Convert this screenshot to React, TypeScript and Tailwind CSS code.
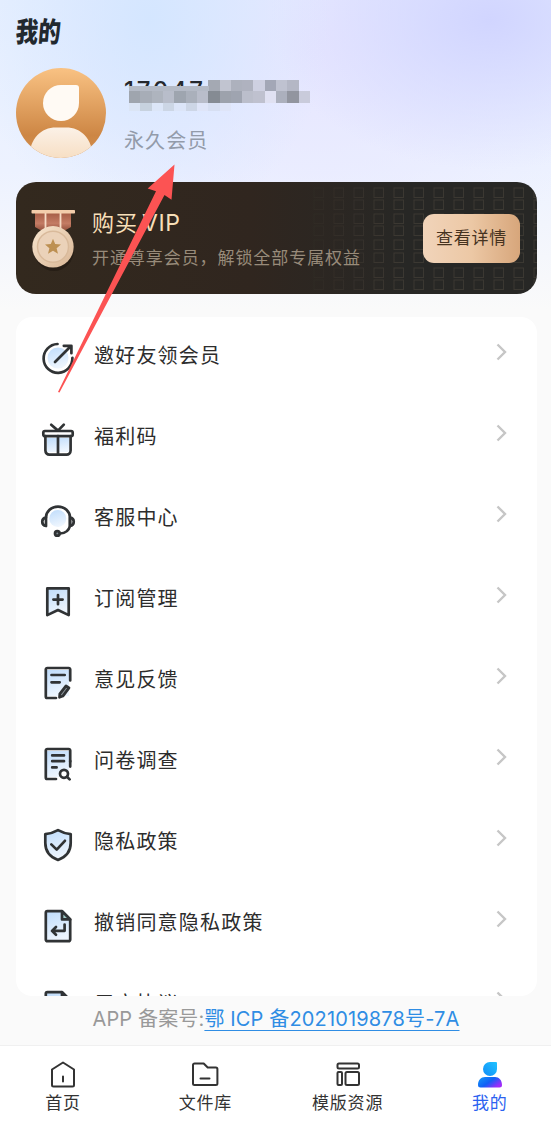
import { ReactNode } from "react";

type MenuItem = {
  label: string;
  icon: ReactNode;
};

type TabProps = {
  label: string;
  icon: ReactNode;
  active?: boolean;
};

const DocOutline = () => (
  <>
    <rect x="7" y="6" width="22" height="26" fill="url(#tint)" stroke="none" />
    <path d="M30.2 16.5V5.5a1.5 1.5 0 0 0-1.5-1.5H7.3a1.5 1.5 0 0 0-1.5 1.5v27a1.5 1.5 0 0 0 1.5 1.5H16" />
  </>
);

const FoldedDoc = () => (
  <>
    <path
      d="M22 4.2H7.4A1.6 1.6 0 0 0 5.8 5.8v26.8a1.6 1.6 0 0 0 1.6 1.6h21.2a1.6 1.6 0 0 0 1.6-1.6V12.4z"
      fill="url(#tint)"
    />
    <path d="M22 4.2v8.2h8.2z" fill="#9ec9c6" />
  </>
);

const menuItems: MenuItem[] = [
  {
    label: "邀好友领会员",
    icon: (
      <>
        <circle cx="18" cy="18" r="10.5" fill="url(#tint)" stroke="none" />
        <path d="M17.5 4a14.4 14.4 0 1 0 14.9 13.8" />
        <path d="M15 22 31 6M23.8 5.8h7.6v7.4" />
      </>
    ),
  },
  {
    label: "福利码",
    icon: (
      <>
        <rect x="7" y="17" width="22" height="14" fill="url(#tint)" stroke="none" />
        <rect x="3.3" y="10" width="29.4" height="5.2" rx="1.6" fill="#fff" />
        <path d="M5.4 15.2v14.4a4 4 0 0 0 4 4h17.2a4 4 0 0 0 4-4V15.2M18 15.2v18.4M11.2 3.8 18 9.6l5.8-6" />
      </>
    ),
  },
  {
    label: "客服中心",
    icon: (
      <>
        <circle cx="17.8" cy="16.5" r="8.5" fill="url(#tint)" stroke="none" />
        <path d="M6 15.6a12 11 0 0 1 24 0v8.4c-1.2 4.5-5 7.3-9.8 7.5" />
        <path d="M6 24v-8.4c-5 .6-5 7.8 0 8.4zM30 15.6c5 .6 5 7.8 0 8.4z" />
        <circle cx="17.3" cy="31.4" r="2.3" fill="#7d8991" />
      </>
    ),
  },
  {
    label: "订阅管理",
    icon: (
      <>
        <path d="M7.3 5.3h21.4v26.8L18 27 7.3 32.1z" fill="url(#tint)" />
        <path d="M18 12v9.2M13.4 16.6h9.2" />
      </>
    ),
  },
  {
    label: "意见反馈",
    icon: (
      <>
        <DocOutline />
        <path d="M11.5 11h13.2M11.5 18.3h8.2" />
        <path d="m26 21.8 3 2.1-6.1 8.2-3.4 1.2.3-3.5z" fill="#8d979d" />
      </>
    ),
  },
  {
    label: "问卷调查",
    icon: (
      <>
        <DocOutline />
        <path d="M30.2 16v5.6M12.2 10.4h11.8M12.2 16.2h11.8M12.2 22.4h4.4" />
        <circle cx="24" cy="28.8" r="4" fill="#fff" />
        <path d="m27 31.8 2.6 2.6" />
      </>
    ),
  },
  {
    label: "隐私政策",
    icon: (
      <>
        <path
          d="M18 4.2c4 2.3 8.3 3.6 12.7 3.9V17c0 8-4.8 14-12.7 16.9C10.1 31 5.3 25 5.3 17V8.1C9.7 7.8 14 6.5 18 4.2z"
          fill="url(#tint)"
        />
        <path d="m11.3 18.4 5.4 5.2 8.2-8.8" />
      </>
    ),
  },
  {
    label: "撤销同意隐私政策",
    icon: (
      <>
        <FoldedDoc />
        <path d="M24.6 17.6v6.2H12.4M16 20l-4 3.9 4 3.9" />
      </>
    ),
  },
  {
    label: "用户协议",
    icon: <FoldedDoc />,
  },
];

const MenuRow = ({ label, icon }: MenuItem) => (
  <div className="flex h-[81px] shrink-0 items-center pr-[29px] pl-6">
    <svg
      className="size-9 shrink-0"
      viewBox="0 0 36 36"
      fill="none"
      stroke="#303335"
      strokeWidth="2.7"
      strokeLinecap="round"
      strokeLinejoin="round"
    >
      {icon}
    </svg>
    <p className="ml-[18px] flex-1 pb-[5px] text-[20px] leading-7 tracking-[1.2px] text-[#2d2d2d]">
      {label}
    </p>
    <svg className="mb-[11px] h-[18px] w-3" viewBox="0 0 12 18" fill="none">
      <path d="m1.5 1.500 7.500 7.500-7.500 7.500" stroke="#c6c6c6" strokeWidth="2.4" />
    </svg>
  </div>
);

const Tab = ({ label, icon, active }: TabProps) => (
  <div className="flex flex-col items-center pt-[13px]">
    <svg
      className="size-8"
      viewBox="0 0 32 32"
      fill="none"
      stroke="#333"
      strokeWidth="2"
      strokeLinejoin="round"
      strokeLinecap="round"
    >
      {icon}
    </svg>
    <p
      className={
        active
          ? "-mt-px text-[17px] leading-6 tracking-[0.8px] text-[#2b62f0]"
          : "-mt-px text-[17px] leading-6 tracking-[0.8px] text-[#333]"
      }
    >
      {label}
    </p>
  </div>
);

const Avatar = () => (
  <svg className="size-[90px]" viewBox="0 0 90 90">
    <defs>
      <linearGradient id="avatarBg" x1="0" y1="0" x2="0" y2="1">
        <stop offset="0" stopColor="#f9c283" />
        <stop offset="0.75" stopColor="#cd8644" />
        <stop offset="1" stopColor="#d28f50" />
      </linearGradient>
      <linearGradient id="avatarBody" x1="0" y1="0" x2="0" y2="1">
        <stop offset="0" stopColor="#fbf1e7" />
        <stop offset="1" stopColor="#f7dfc4" />
      </linearGradient>
      <clipPath id="avatarClip">
        <circle cx="45" cy="45" r="45" />
      </clipPath>
    </defs>
    <g clipPath="url(#avatarClip)">
      <rect width="90" height="90" fill="url(#avatarBg)" />
      <path d="M45 17h15a3 3 0 0 1 3 3v15a18 18 0 1 1-18-18z" fill="#fffaf4" />
      <path d="M13 90c1-20 12-30.5 27-30.5h10c15 0 26 10.5 27 30.5z" fill="url(#avatarBody)" />
    </g>
  </svg>
);

const Medal = () => (
  <svg className="h-[64px] w-[48px]" viewBox="0 0 48 64">
    <defs>
      <linearGradient id="disc" x1="0" y1="0" x2="1" y2="1">
        <stop offset="0" stopColor="#f8e6cf" />
        <stop offset="1" stopColor="#d9b695" />
      </linearGradient>
      <linearGradient id="ribbon" x1="0" y1="0" x2="0" y2="1">
        <stop offset="0" stopColor="#a35a43" />
        <stop offset="0.6" stopColor="#c47c64" />
        <stop offset="1" stopColor="#91503c" />
      </linearGradient>
    </defs>
    <ellipse cx="25" cy="42" rx="20" ry="21" fill="#1c140d" opacity="0.5" />
    <path d="M6 4h36v15l-7 4H13l-7-4z" fill="url(#ribbon)" />
    <path d="M16.5 4v18M31.5 4v18" stroke="#f6dbc6" strokeWidth="1.8" />
    <rect x="2.5" y="2" width="43.5" height="3.5" rx="0.8" fill="#f3cdab" />
    <circle cx="24" cy="38.8" r="20.7" fill="url(#disc)" />
    <circle cx="24" cy="38.8" r="15.5" fill="#ebd2b9" stroke="#d9ba9b" strokeWidth="1.5" />
    <path
      d="m24 30.8 2.2 5.3 5.8.4-4.4 3.7 1.4 5.6-5-3-5 3 1.4-5.6-4.4-3.7 5.8-.4z"
      fill="#bd9052"
    />
  </svg>
);

const patternColumns = [0, 1, 2, 3, 4, 5, 6, 7, 8, 9, 10, 11];
const patternRows = [6, 18, 32, 44, 58, 71, 86, 98];

const BannerPattern = () => (
  <svg className="absolute top-0 right-0 h-full w-[240px]" viewBox="0 0 240 112" fill="none">
    {patternColumns.map((col) =>
      patternRows.map((row) => (
        <rect
          key={`${col}-${row}`}
          x={col * 20 + 17}
          y={row}
          width="9.5"
          height="9.5"
          stroke="#5a5347"
          strokeWidth="1"
          opacity={Math.min(0.4, 0.1 + col * 0.08)}
        />
      ))
    )}
  </svg>
);

// pixel blocks covering the phone number, one colour per cell
const maskRows = [
  {
    className: "flex h-[11px]",
    cells: ["#00000000", "#00000000", "#00000000", "#00000000", "#00000000", "#00000000", "#00000000", "#a4a9b3", "#c1c4d0", "#adb1bd", "#afb2bf", "#ced0e1", "#a3a7b6", "#bfc2d0", "#b4b7c5", "#00000000"],
  },
  {
    className: "flex h-3",
    cells: ["#9fa5ae", "#a7adb7", "#aeb4be", "#b8bdca", "#9ea5af", "#aab0bb", "#b9bdca", "#858b93", "#9da2ac", "#9fa4b0", "#bbbecb", "#bfc1cf", "#e0e1f2", "#acb0bd", "#92959f", "#c9cbdb"],
  },
  {
    className: "flex h-2",
    cells: ["#dbe5f5", "#c7d2df", "#dce6f8", "#ccd6e5", "#dce5f8", "#cdd6e6", "#dfe5f8", "#d7dff2", "#dfe5f8", "#00000000", "#00000000", "#00000000", "#00000000", "#00000000", "#00000000", "#00000000"],
  },
];

const PhoneNumber = () => (
  <div className="relative h-[34px] w-[190px]">
    <p className="h-[11px] overflow-hidden font-['Inter'] text-[24px] leading-[28px] font-medium tracking-[2.7px] text-[#25282d]">
      17047
    </p>
    <div className="absolute top-[3px] left-[5px] w-[181px]">
      {maskRows.map((row, i) => (
        <div key={i} className={row.className}>
          {row.cells.map((color, j) => (
            <div key={j} className="flex-1" style={{ backgroundColor: color }} />
          ))}
        </div>
      ))}
      <div className="absolute top-[6px] left-0 h-[5px] w-[80px] bg-[#b4bac6]" />
    </div>
  </div>
);

const Banner = () => (
  <section className="relative mr-[14px] ml-4 flex h-28 items-center overflow-hidden rounded-[20px] bg-linear-to-r from-[#33291e] via-[#30261f] via-45% to-[#272725] to-75%">
    <BannerPattern />
    <div className="relative ml-[13px] pt-1">
      <Medal />
    </div>
    <div className="relative ml-[15px] flex-1 whitespace-nowrap">
      <h2 className="text-[22px] leading-8 tracking-[1px] text-[#f7dfb8]">
        购买<span className="ml-1 font-['Inter'] text-[23px] tracking-[0.6px]">VIP</span>
      </h2>
      <p className="mt-1 text-[17px] leading-7 tracking-[0.93px] text-[#988b7a]">
        开通尊享会员，解锁全部专属权益
      </p>
    </div>
    <button className="relative mr-[17px] h-[49px] w-[97px] rounded-[11px] bg-linear-to-r from-[#f1d4ba] via-[#ecc8a5] to-[#d7a67b] pb-0.5 text-[17px] tracking-[0.7px] text-[#46331f]">
      查看详情
    </button>
  </section>
);

const App = () => {
  return (
    <div className="relative flex h-[1130px] w-[551px] flex-col overflow-hidden bg-[#fafafa] font-['Noto_Sans_CJK_SC',sans-serif]">
      <div className="absolute inset-x-0 top-0 h-[310px] bg-[radial-gradient(ellipse_180px_210px_at_150px_20px,#d4e6ff,transparent),radial-gradient(ellipse_220px_150px_at_490px_20px,#d1d5ff,transparent),radial-gradient(ellipse_300px_230px_at_320px_50px,#e7e6ff,transparent),linear-gradient(#e6efff,#edf2ff_55%,#fafafa)]" />
      <svg className="absolute size-0">
        <defs>
          <linearGradient id="tint" x1="0" y1="0" x2="0.3" y2="1">
            <stop offset="0" stopColor="#bfdcfb" />
            <stop offset="1" stopColor="#edf5fe" />
          </linearGradient>
        </defs>
      </svg>

      <header className="relative flex h-[182px] flex-col px-4 pt-3">
        <h1 className="h-9 w-[60px] origin-left -skew-x-6 scale-x-[0.8] text-[28px] leading-9 font-black whitespace-nowrap text-[#22292f]">
          我的
        </h1>
        <div className="mt-5 flex">
          <Avatar />
          <div className="ml-[18px] pt-[9px]">
            <PhoneNumber />
            <p className="mt-[15px] text-[20px] leading-7 tracking-[1.1px] text-[#939baa]">
              永久会员
            </p>
          </div>
        </div>
      </header>

      <Banner />

      <main className="relative mt-[23px] mr-[14px] ml-4 flex h-[679px] flex-col overflow-hidden rounded-2xl bg-white">
        {menuItems.map((item) => (
          <MenuRow key={item.label} {...item} />
        ))}
      </main>

      <p className="flex h-[49px] justify-center pt-2 pl-px font-['Inter','Noto_Sans_CJK_SC',sans-serif] text-[20px] leading-[30px] tracking-[0.15px] whitespace-nowrap text-[#999]">
        <span>APP 备案号:</span>
        <a className="text-[#2f8de4] underline decoration-1 underline-offset-4">
          鄂 ICP 备2021019878号-7A
        </a>
      </p>

      <nav className="-mr-[10px] -ml-2 grid h-[85px] shrink-0 grid-cols-4 border-t border-[#f0f0f0] bg-white">
        <Tab
          label="首页"
          icon={
            <path d="M16 3.5 27 10.5V26a1.5 1.5 0 0 1-1.5 1.5h-19A1.5 1.5 0 0 1 5 26V10.5zM16 17.5v5" />
          }
        />
        <Tab
          label="文件库"
          icon={
            <path d="M5.5 4.5h9.2l4 4h8.2a1.5 1.5 0 0 1 1.5 1.5v14.5a1.5 1.5 0 0 1-1.5 1.5H5.5A1.5 1.5 0 0 1 4 24.5V6a1.5 1.5 0 0 1 1.5-1.5zM11.5 19.5h9" />
          }
        />
        <Tab
          label="模版资源"
          icon={
            <>
              <rect x="5.5" y="4.5" width="21.5" height="5" rx="1.5" />
              <rect x="5.5" y="13" width="4.5" height="13" rx="1" />
              <rect x="13.5" y="13" width="13.5" height="13" rx="1.5" />
            </>
          }
        />
        <Tab
          active
          label="我的"
          icon={
            <g stroke="none">
              <defs>
                <linearGradient id="meHead" x1="1" y1="0" x2="0" y2="1">
                  <stop offset="0" stopColor="#20c3ff" />
                  <stop offset="1" stopColor="#118cf8" />
                </linearGradient>
                <linearGradient id="meBody" x1="0" y1="0" x2="1" y2="0.6">
                  <stop offset="0" stopColor="#1399f8" />
                  <stop offset="0.55" stopColor="#1260f5" />
                  <stop offset="1" stopColor="#a02bfa" />
                </linearGradient>
              </defs>
              <path d="M16 3h6a1 1 0 0 1 1 1v6a7 7 0 1 1-7-7z" fill="url(#meHead)" />
              <path d="M4 26c0-5 3-8 7-8h10c4 0 7 3 7 8a2.5 2.5 0 0 1-2.5 2.5h-19A2.5 2.5 0 0 1 4 26z" fill="url(#meBody)" />
            </g>
          }
        />
      </nav>

      <svg className="pointer-events-none absolute top-[160px] left-[50px] h-[240px] w-[130px]" viewBox="50 160 130 240">
        <path
          d="M174.5 164.5 147.7 188.5 156 191.3 58 392l1.5.5 105-197.5 7 4.7z"
          fill="#fc5353"
        />
      </svg>
    </div>
  );
};

export default App;
